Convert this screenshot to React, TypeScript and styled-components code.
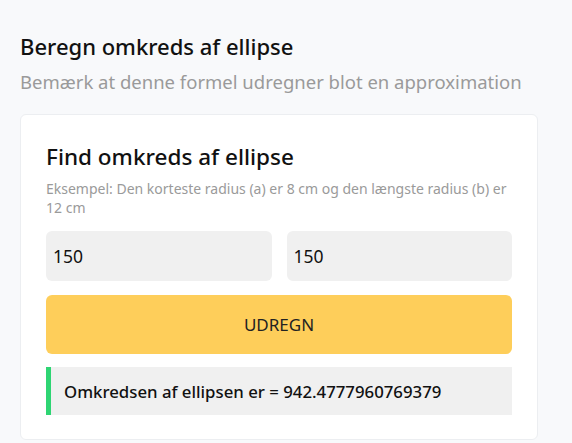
import styled, { createGlobalStyle } from "styled-components";

const GlobalStyle = createGlobalStyle`
    html, body {
        margin: 0;
        padding: 0;
        background: #f8f9fb;
        font-family: "Noto Sans", "Open Sans", sans-serif;
        color: #111;
    }
    * {
        box-sizing: border-box;
    }
`;

const Page = styled.div`
    padding: 31px 20px 0 20px;
    width: 572px;
`;

const Heading = styled.h1`
    margin: 0;
    font-size: 22px;
    font-weight: 500;
    line-height: 30px;
`;

const Note = styled.p`
    margin: 8px 0 0 0;
    font-size: 18.5px;
    line-height: 26px;
    color: #9a9a9a;
`;

const Card = styled.div`
    margin-top: 19px;
    width: 518px;
    background: #fff;
    border: 1px solid #eceef1;
    border-radius: 6px;
    padding: 26px 25px 24px 25px;
    display: flex;
    flex-direction: column;
`;

const CardTitle = styled.h2`
    margin: 0;
    font-size: 22.5px;
    font-weight: 500;
    line-height: 32px;
`;

const Example = styled.p`
    margin: 6px 0 0 0;
    font-size: 14px;
    line-height: 19px;
    color: #9a9a9a;
`;

const Inputs = styled.div`
    margin-top: 14px;
    display: grid;
    grid-template-columns: 1fr 1fr;
    gap: 15px;
`;

const Field = styled.input`
    width: 100%;
    min-width: 0;
    height: 50px;
    border: none;
    outline: none;
    border-radius: 6px;
    background: #f0f0f0;
    padding: 0 7px;
    font-family: inherit;
    font-size: 17.5px;
    color: #111;
`;

const Button = styled.button`
    margin-top: 14px;
    height: 59px;
    border: none;
    border-radius: 6px;
    background: #fece5a;
    font-family: inherit;
    font-size: 17px;
    color: #222;
    cursor: pointer;
`;

const Result = styled.div`
    margin-top: 13px;
    height: 48px;
    background: #f0f0f0;
    border-left: 5px solid #2ed573;
    display: flex;
    align-items: center;
    padding-left: 13px;
    font-size: 16.8px;
    font-weight: 500;
    color: #111;
`;

export default function App() {
    return (
        <>
            <GlobalStyle />
            <Page>
                <Heading>Beregn omkreds af ellipse</Heading>
                <Note>Bemærk at denne formel udregner blot en approximation</Note>
                <Card>
                    <CardTitle>Find omkreds af ellipse</CardTitle>
                    <Example>
                        Eksempel: Den korteste radius (a) er 8 cm og den længste
                        radius (b) er 12 cm
                    </Example>
                    <Inputs>
                        <Field defaultValue="150" />
                        <Field defaultValue="150" />
                    </Inputs>
                    <Button>UDREGN</Button>
                    <Result>Omkredsen af ellipsen er = 942.4777960769379</Result>
                </Card>
            </Page>
        </>
    );
}
